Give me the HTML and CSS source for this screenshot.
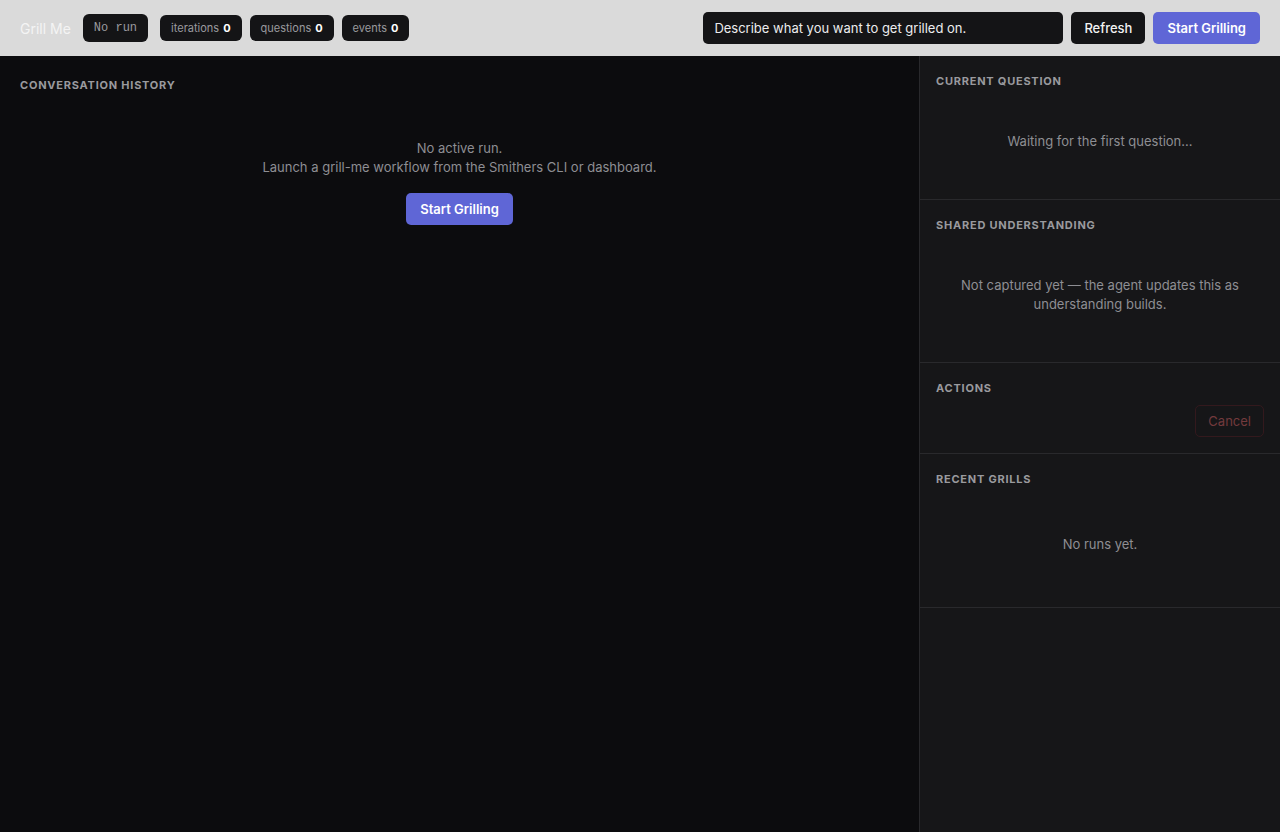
FILE: index.html
```html
<!DOCTYPE html>
<html lang="en">
<head>
    <meta charset="UTF-8">
    <meta name="viewport" content="width=device-width, initial-scale=1.0">
    <title>Grill Me</title>
    <link rel="stylesheet" href="styles.css">
</head>
<body>

    <!-- top bar -->
    <header class="topbar">
        <div class="topbar-left">
            <span class="brand">Grill Me</span>
            <span class="run-badge">No run</span>
            <div class="stats">
                <span class="stat">iterations <b>0</b></span>
                <span class="stat">questions <b>0</b></span>
                <span class="stat">events <b>0</b></span>
            </div>
        </div>
        <div class="topbar-right">
            <input type="text" class="prompt-input" value="Describe what you want to get grilled on.">
            <button class="btn btn-dark">Refresh</button>
            <button class="btn btn-primary">Start Grilling</button>
        </div>
    </header>

    <main class="layout">
        <section class="history">
            <h2 class="section-title">Conversation History</h2>
            <div class="history-empty">
                <p>No active run.<br>Launch a grill-me workflow from the Smithers CLI or dashboard.</p>
                <button class="btn btn-primary">Start Grilling</button>
            </div>
        </section>

        <aside class="sidebar">
            <div class="panel">
                <h2 class="section-title">Current Question</h2>
                <div class="empty">Waiting for the first question...</div>
            </div>
            <div class="panel">
                <h2 class="section-title">Shared Understanding</h2>
                <div class="empty">Not captured yet — the agent updates this as<br>understanding builds.</div>
            </div>
            <div class="panel">
                <h2 class="section-title">Actions</h2>
                <div class="actions">
                    <button class="btn btn-cancel" disabled>Cancel</button>
                </div>
            </div>
            <div class="panel">
                <h2 class="section-title">Recent Grills</h2>
                <div class="empty empty-runs">No runs yet.</div>
            </div>
        </aside>
    </main>

</body>
</html>
```

FILE: styles.css
```css
* {
    box-sizing: border-box;
}

html, body {
    height: 100%;
}

body {
    margin: 0;
    font-family: Inter, 'Noto Sans', sans-serif;
    font-size: 13px;
    background: #0c0c0e;
    color: #e6e6e8;
    display: flex;
    flex-direction: column;
}

/* top bar */
.topbar {
    height: 56px;
    flex-shrink: 0;
    background: #dadada;
    display: flex;
    align-items: center;
    justify-content: space-between;
    padding: 0 20px;
}

.topbar-left, .topbar-right, .stats {
    display: flex;
    align-items: center;
}

.topbar-left {
    gap: 12px;
}

.stats {
    gap: 8px;
}

.topbar-right {
    gap: 8px;
}

.brand {
    color: #f4f4f4;
    font-size: 14px;
    margin-top: 1px;
}

.run-badge {
    height: 28px;
    padding: 0 11px;
    display: flex;
    align-items: center;
    background: #141416;
    border-radius: 6px;
    font-family: 'Liberation Mono', 'DejaVu Sans Mono', monospace;
    font-size: 12px;
    color: #9a9a9e;
}

.stat {
    height: 26px;
    padding: 0 11px;
    display: flex;
    align-items: center;
    gap: 4px;
    background: #141416;
    border-radius: 6px;
    font-size: 11px;
    color: #9a9a9e;
}

.stat b {
    color: #ffffff;
    font-weight: 700;
}

.prompt-input {
    width: 360px;
    height: 32px;
    padding: 0 11px;
    background: #141416;
    border: none;
    border-radius: 5px;
    color: #ececee;
    font-family: inherit;
    font-size: 13px;
    outline: none;
}

.btn {
    height: 32px;
    padding: 0 14px;
    border: none;
    border-radius: 5px;
    font-family: inherit;
    font-size: 13px;
    font-weight: 600;
    cursor: pointer;
}

.btn-dark {
    background: #141416;
    color: #f2f2f2;
    font-weight: 500;
    padding: 0 13px;
}

.btn-primary {
    background: #5f66d6;
    color: #ffffff;
}

.btn-cancel {
    background: transparent;
    border: 1px solid #33191d;
    color: #733a3d;
    font-weight: 400;
    padding: 0 12px;
    cursor: default;
}

/* main area */
.layout {
    flex: 1;
    display: flex;
}

.history {
    flex: 1;
    padding: 20px;
    background: #0c0c0e;
}

.sidebar {
    width: 361px;
    flex-shrink: 0;
    background: #161618;
    border-left: 1px solid #29292c;
}

.section-title {
    margin: 0;
    font-size: 11px;
    line-height: 18px;
    font-weight: 700;
    letter-spacing: 0.07em;
    text-transform: uppercase;
    color: #9a9a9e;
}

.history-empty {
    margin-top: 45px;
    text-align: center;
    color: #8e8e93;
    line-height: 19px;
}

.history-empty p {
    margin: 0 0 16px;
}

.panel {
    padding: 16px;
    border-bottom: 1px solid #29292c;
}

.panel .section-title {
    margin-bottom: 10px;
}

.empty {
    padding: 32px 0;
    text-align: center;
    line-height: 19px;
    color: #8e8e93;
}

.empty-runs {
    padding: 37px 0;
}

.actions {
    display: flex;
    justify-content: flex-end;
    margin-top: -2px;
}
```
